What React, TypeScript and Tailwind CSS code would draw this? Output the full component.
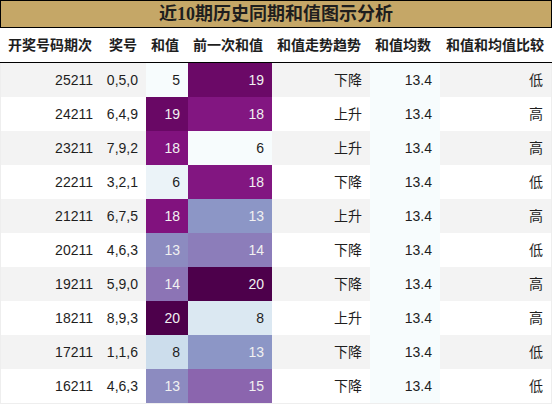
import React from "react";

type Row = {
  issue: string;
  balls: string;
  sum: number;
  sumCls: string;
  prev: number;
  prevCls: string;
  trend: string;
  cmp: string;
};

const light = "text-[#f1f1f1]";
const dark = "text-[#1e1e1e]";

const rows: Row[] = [
  { issue: "25211", balls: "0,5,0", sum: 5, sumCls: `bg-[#f7fcfd] ${dark}`, prev: 19, prevCls: `bg-[#6b0967] ${light}`, trend: "下降", cmp: "低" },
  { issue: "24211", balls: "6,4,9", sum: 19, sumCls: `bg-[#690865] ${light}`, prev: 18, prevCls: `bg-[#821681] ${light}`, trend: "上升", cmp: "高" },
  { issue: "23211", balls: "7,9,2", sum: 18, sumCls: `bg-[#81127e] ${light}`, prev: 6, prevCls: `bg-[#f7fcfd] ${dark}`, trend: "上升", cmp: "高" },
  { issue: "22211", balls: "3,2,1", sum: 6, sumCls: `bg-[#ebf3f8] ${dark}`, prev: 18, prevCls: `bg-[#821681] ${light}`, trend: "下降", cmp: "低" },
  { issue: "21211", balls: "6,7,5", sum: 18, sumCls: `bg-[#81127e] ${light}`, prev: 13, prevCls: `bg-[#8c96c6] ${light}`, trend: "上升", cmp: "高" },
  { issue: "20211", balls: "4,6,3", sum: 13, sumCls: `bg-[#8c8bc0] ${light}`, prev: 14, prevCls: `bg-[#8c7dba] ${light}`, trend: "下降", cmp: "低" },
  { issue: "19211", balls: "5,9,0", sum: 14, sumCls: `bg-[#8c74b5] ${light}`, prev: 20, prevCls: `bg-[#4d004b] ${light}`, trend: "下降", cmp: "高" },
  { issue: "18211", balls: "8,9,3", sum: 20, sumCls: `bg-[#4d004b] ${light}`, prev: 8, prevCls: `bg-[#dbe8f2] ${dark}`, trend: "上升", cmp: "高" },
  { issue: "17211", balls: "1,1,6", sum: 8, sumCls: `bg-[#ccddec] ${dark}`, prev: 13, prevCls: `bg-[#8c96c6] ${light}`, trend: "下降", cmp: "低" },
  { issue: "16211", balls: "4,6,3", sum: 13, sumCls: `bg-[#8c8bc0] ${light}`, prev: 15, prevCls: `bg-[#8b65ae] ${light}`, trend: "下降", cmp: "低" },
];

const headers = ["开奖号码期次", "奖号", "和值", "前一次和值", "和值走势趋势", "和值均数", "和值和均值比较"];

const cols = "grid grid-cols-[100px_45px_42px_84px_98px_70px_1fr]";
const cell = "flex items-center justify-end pr-2 h-[34px]";

const App = () => {
  return (
    <div className="w-[552px] h-[405px] bg-white font-['Liberation_Sans','Noto_Sans_CJK_SC',sans-serif] text-[14px] text-[#1e1e1e]">
      <div className="h-[28px] border border-black bg-[#c5a767] flex items-center justify-center">
        <h1 className="font-bold text-[18px] text-[#1e1e1e] font-['Liberation_Serif','Noto_Sans_CJK_SC',serif] leading-none">
          近10期历史同期和值图示分析
        </h1>
      </div>
      <div className={`${cols} border-b border-black font-bold`}>
        {headers.map((h) => (
          <div key={h} className={cell}>
            {h}
          </div>
        ))}
      </div>
      <div className="border-b border-r border-l border-[#eeeeee]">
        {rows.map((r, i) => (
          <div key={r.issue} className={`${cols} ${i % 2 === 0 ? "bg-[#f3f3f3]" : "bg-white"}`}>
            <div className={cell}>{r.issue}</div>
            <div className={cell}>{r.balls}</div>
            <div className={`${cell} ${r.sumCls}`}>{r.sum}</div>
            <div className={`${cell} ${r.prevCls}`}>{r.prev}</div>
            <div className={cell}>{r.trend}</div>
            <div className={`${cell} bg-[#f7fcfd]`}>13.4</div>
            <div className={cell}>{r.cmp}</div>
          </div>
        ))}
      </div>
    </div>
  );
};

export default App;
